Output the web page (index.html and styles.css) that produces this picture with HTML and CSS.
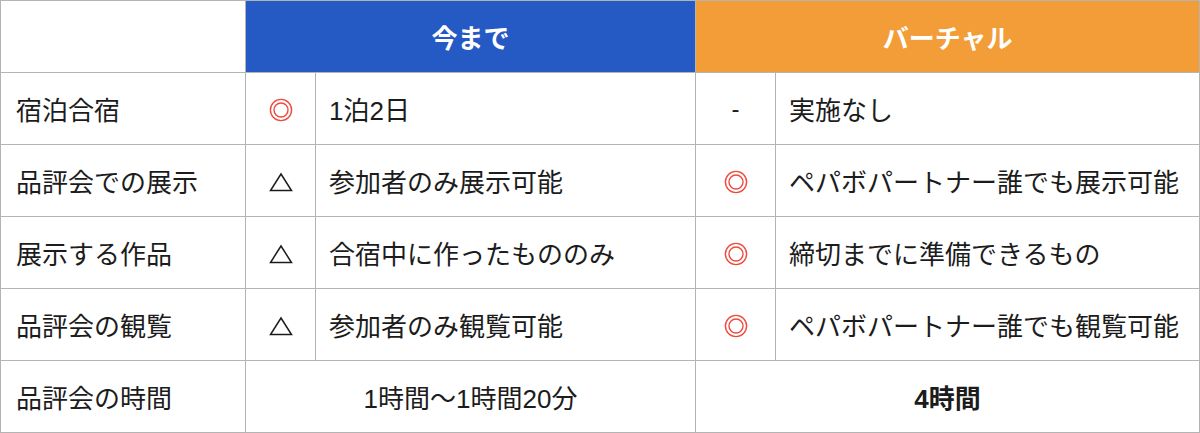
FILE: index.html
```html
<!DOCTYPE html>
<html lang="ja">
<head>
<meta charset="utf-8">
<link rel="stylesheet" href="styles.css">
</head>
<body>
<table class="cmp">
  <colgroup>
    <col class="c-label">
    <col class="c-mark1">
    <col class="c-text1">
    <col class="c-mark2">
    <col class="c-text2">
  </colgroup>
  <thead>
    <tr>
      <th class="blank"></th>
      <th class="head head-blue" colspan="2">今まで</th>
      <th class="head head-orange" colspan="2">バーチャル</th>
    </tr>
  </thead>
  <tbody>
    <tr>
      <td class="label">宿泊合宿</td>
      <td class="mark"><svg class="dbl" viewBox="0 0 24 24" width="24" height="24"><circle cx="12" cy="12" r="10.6"/><circle cx="12" cy="12" r="7"/></svg></td>
      <td class="text">1泊2日</td>
      <td class="mark dash">-</td>
      <td class="text">実施なし</td>
    </tr>
    <tr>
      <td class="label">品評会での展示</td>
      <td class="mark"><svg class="tri" viewBox="0 0 24 20" width="24" height="20"><polygon points="12,2 22.5,18.5 1.5,18.5"/></svg></td>
      <td class="text">参加者のみ展示可能</td>
      <td class="mark"><svg class="dbl" viewBox="0 0 24 24" width="24" height="24"><circle cx="12" cy="12" r="10.6"/><circle cx="12" cy="12" r="7"/></svg></td>
      <td class="text">ペパボパートナー誰でも展示可能</td>
    </tr>
    <tr>
      <td class="label">展示する作品</td>
      <td class="mark"><svg class="tri" viewBox="0 0 24 20" width="24" height="20"><polygon points="12,2 22.5,18.5 1.5,18.5"/></svg></td>
      <td class="text">合宿中に作ったもののみ</td>
      <td class="mark"><svg class="dbl" viewBox="0 0 24 24" width="24" height="24"><circle cx="12" cy="12" r="10.6"/><circle cx="12" cy="12" r="7"/></svg></td>
      <td class="text">締切までに準備できるもの</td>
    </tr>
    <tr>
      <td class="label">品評会の観覧</td>
      <td class="mark"><svg class="tri" viewBox="0 0 24 20" width="24" height="20"><polygon points="12,2 22.5,18.5 1.5,18.5"/></svg></td>
      <td class="text">参加者のみ観覧可能</td>
      <td class="mark"><svg class="dbl" viewBox="0 0 24 24" width="24" height="24"><circle cx="12" cy="12" r="10.6"/><circle cx="12" cy="12" r="7"/></svg></td>
      <td class="text">ペパボパートナー誰でも観覧可能</td>
    </tr>
    <tr>
      <td class="label">品評会の時間</td>
      <td class="center" colspan="2">1時間～1時間20分</td>
      <td class="center bold" colspan="2">4時間</td>
    </tr>
  </tbody>
</table>
</body>
</html>
```

FILE: styles.css
```css
html, body {
  margin: 0;
  padding: 0;
  background: #ffffff;
}

.cmp {
  border-collapse: collapse;
  table-layout: fixed;
  width: 1199px;
  font-family: "Liberation Sans", "Noto Sans CJK JP", sans-serif;
  font-size: 26px;
  color: #1c1c1c;
}

.c-label { width: 245px; }
.c-mark1 { width: 70px; }
.c-text1 { width: 380px; }
.c-mark2 { width: 80px; }
.c-text2 { width: 424px; }

.cmp th,
.cmp td {
  border: 1px solid #b4b4b4;
  height: 72px;
  padding: 0;
  vertical-align: middle;
  box-sizing: border-box;
}

.head {
  color: #ffffff;
  font-weight: bold;
  text-align: center;
  font-size: 26px;
}

.head-blue { background: #2559c4; }
.head-orange { background: #f29d38; }

.label {
  padding-left: 15px !important;
  text-align: left;
}

.text {
  padding-left: 13px !important;
  text-align: left;
}

.mark {
  text-align: center;
}

.mark svg {
  display: inline-block;
  vertical-align: middle;
}

.dbl circle {
  fill: none;
  stroke: #ee4a3e;
  stroke-width: 1.4;
}

.tri polygon {
  fill: none;
  stroke: #1c1c1c;
  stroke-width: 1.5;
  stroke-linejoin: miter;
}

.dash {
  font-size: 24px;
}

.center {
  text-align: center;
}

.bold {
  font-weight: bold;
}
```
